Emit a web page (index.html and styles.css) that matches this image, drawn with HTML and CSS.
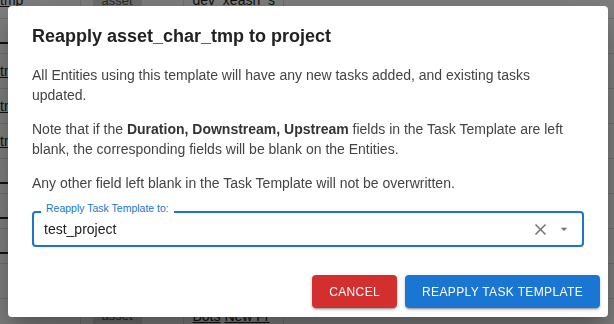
FILE: index.html
```html
<!DOCTYPE html>
<html lang="en">
<head>
    <meta charset="UTF-8">
    <meta name="viewport" content="width=device-width, initial-scale=1.0">
    <title>Reapply Task Template</title>
    <link rel="stylesheet" href="styles.css">
</head>
<body>

    <!-- task template table behind the dialog -->
    <div class="page">
        <table class="grid">
            <colgroup>
                <col class="c-name">
                <col class="c-kind">
                <col class="c-proj">
                <col>
            </colgroup>
            <tr><td class="name"><a>tmp</a></td><td class="kind"><span class="chip">asset</span></td><td class="proj">dev_xeash_s</td><td class="rest"></td></tr>
            <tr><td class="name"><a>_tmp</a></td><td class="kind"><span class="chip">asset</span></td><td class="proj">dev_xeash_s</td><td class="rest"></td></tr>
            <tr><td class="name"><a>tmp</a></td><td class="kind"><span class="chip">asset</span></td><td class="proj">dev_xeash_s</td><td class="rest"></td></tr>
            <tr><td class="name"><a>tmp</a></td><td class="kind"><span class="chip">asset</span></td><td class="proj">dev_xeash_s</td><td class="rest"></td></tr>
            <tr><td class="name"><a>tmp</a></td><td class="kind"><span class="chip">asset</span></td><td class="proj">dev_xeash_s</td><td class="rest"></td></tr>
            <tr><td class="name"><a>_tmp</a></td><td class="kind"><span class="chip">asset</span></td><td class="proj">dev_xeash_s</td><td class="rest"></td></tr>
            <tr><td class="name"><a>_tmp</a></td><td class="kind"><span class="chip">asset</span></td><td class="proj">dev_xeash_s</td><td class="rest"></td></tr>
            <tr><td class="name"><a>_tmp</a></td><td class="kind"><span class="chip">asset</span></td><td class="proj">dev_xeash_s</td><td class="rest"></td></tr>
            <tr><td class="name"></td><td class="kind"><span class="chip">asset</span></td><td class="proj">dev_xeash_s</td><td class="rest"></td></tr>
            <tr><td class="name"></td><td class="kind"><span class="chip">asset</span></td><td class="proj"><a>Bots</a> <a>New Fr</a></td><td class="rest"></td></tr>
        </table>
    </div>

    <!-- modal -->
    <div class="backdrop"></div>
    <div class="modal">
        <div class="dialog">
            <h2 class="dialog-title">Reapply asset_char_tmp to project</h2>

            <div class="dialog-content">
                <p>All Entities using this template will have any new tasks added, and existing tasks updated.</p>
                <p>Note that if the <b>Duration, Downstream, Upstream</b> fields in the Task Template are left blank, the corresponding fields will be blank on the Entities.</p>
                <p>Any other field left blank in the Task Template will not be overwritten.</p>

                <div class="field">
                    <span class="field-label">Reapply Task Template to:</span>
                    <span class="field-value">test_project</span>
                    <div class="field-icons">
                        <svg class="icon-clear" viewBox="0 0 24 24"><path d="M19 6.41 17.59 5 12 10.59 6.41 5 5 6.41 10.59 12 5 17.59 6.41 19 12 13.41 17.59 19 19 17.59 13.41 12z"/></svg>
                        <svg class="icon-drop" viewBox="0 0 24 24"><path d="M7 10l5 5 5-5z"/></svg>
                    </div>
                </div>
            </div>

            <div class="dialog-actions">
                <button type="button" class="btn btn-cancel">Cancel</button>
                <button type="button" class="btn btn-apply">Reapply Task Template</button>
            </div>
        </div>
    </div>

</body>
</html>
```

FILE: styles.css
```css
body {
    font-family: 'Liberation Sans', Arial, sans-serif;
    background-color: #fff;
    margin: 0;
    padding: 0;
    overflow: hidden;
    height: 324px;
}

/* table behind the dialog */
.page {
    margin-top: -17px;
}

.grid {
    border-collapse: collapse;
    table-layout: fixed;
    width: 614px;
    font-size: 14px;
    color: #222;
}

.grid .c-name {
    width: 80px;
}

.grid .c-kind {
    width: 103px;
}

.grid .c-proj {
    width: 100px;
}

.grid td {
    box-sizing: border-box;
    height: 35px;
    padding: 0;
    border-bottom: 1px solid #e0e0e0;
    white-space: nowrap;
    overflow: hidden;
}

.grid a {
    color: #222;
    text-decoration: underline;
}

.grid .name {
    border-right: 1px solid #e0e0e0;
}

.grid .kind {
    padding-left: 12px;
    border-right: 1px solid #e0e0e0;
}

.grid .proj {
    padding-left: 9px;
    border-right: 1px solid #e0e0e0;
}

.chip {
    display: inline-block;
    background-color: #e0e0e0;
    color: #555;
    font-size: 13px;
    padding: 4px 9px;
    border-radius: 2px;
}

/* modal */
.backdrop {
    position: fixed;
    top: 0;
    left: 0;
    right: 0;
    bottom: 0;
    background-color: rgba(0, 0, 0, 0.5);
}

.modal {
    position: fixed;
    top: 0;
    left: 0;
    right: 0;
    bottom: 0;
    display: flex;
    align-items: flex-start;
    padding: 6px 0 0 8px;
}

.dialog {
    width: 600px;
    background-color: #fff;
    border-radius: 4px;
    box-shadow: 0 11px 15px -7px rgba(0, 0, 0, 0.2), 0 24px 38px 3px rgba(0, 0, 0, 0.14), 0 9px 46px 8px rgba(0, 0, 0, 0.12);
}

.dialog-title {
    margin: 0;
    padding: 16px 24px 15px;
    font-size: 18px;
    line-height: 28px;
    font-weight: bold;
    color: #222;
}

.dialog-content {
    padding: 0 24px 20px;
}

.dialog-content p {
    margin: 0 0 14px;
    font-size: 14px;
    line-height: 20px;
    color: #444;
}

.dialog-content p b {
    color: #333;
}

/* outlined select */
.field {
    position: relative;
    margin-top: 18px;
    height: 32px;
    border: 2px solid #1976d2;
    border-radius: 4px;
    display: flex;
    align-items: center;
}

.field-label {
    position: absolute;
    left: 7px;
    top: -11px;
    padding: 0 5px;
    background-color: #fff;
    font-size: 10.5px;
    line-height: 12px;
    color: #1976d2;
}

.field-value {
    flex: 1;
    padding-left: 10px;
    font-size: 14px;
    color: #222;
}

.field-icons {
    display: flex;
    align-items: center;
    gap: 6px;
    padding-right: 10px;
}

.icon-clear {
    width: 19px;
    height: 19px;
    fill: #757575;
}

.icon-drop {
    width: 16px;
    height: 16px;
    fill: #757575;
}

/* buttons */
.dialog-actions {
    display: flex;
    justify-content: flex-end;
    gap: 8px;
    padding: 8px 8px 9px;
}

.btn {
    height: 33px;
    padding: 0 17px;
    border: none;
    border-radius: 4px;
    font-family: 'Liberation Sans', Arial, sans-serif;
    font-size: 12px;
    letter-spacing: 0.36px;
    text-transform: uppercase;
    color: #fff;
    cursor: pointer;
    box-shadow: 0 3px 1px -2px rgba(0, 0, 0, 0.2), 0 2px 2px 0 rgba(0, 0, 0, 0.14), 0 1px 5px 0 rgba(0, 0, 0, 0.12);
}

.btn-cancel {
    background-color: #d32f2f;
}

.btn-apply {
    background-color: #1976d2;
}
```
